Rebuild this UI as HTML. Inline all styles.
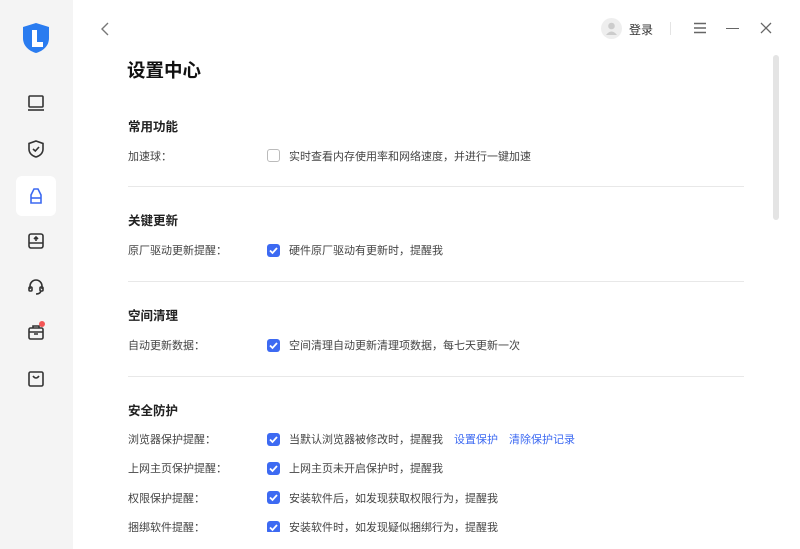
<!DOCTYPE html>
<html><head><meta charset="utf-8"><style>
*{margin:0;padding:0;box-sizing:border-box}
body{width:800px;height:549px;overflow:hidden;background:#fff;font-family:"Liberation Sans","Noto Sans CJK SC",sans-serif;color:#333;position:relative}
.side{position:absolute;left:0;top:0;width:73px;height:549px;background:#f4f4f4}
.ic{position:absolute;left:26px;width:20px;height:20px}
.a{position:absolute;white-space:nowrap}
.h{font-size:12.5px;font-weight:bold;color:#222;left:128px}
.l{font-size:11px;color:#444;left:128px}
.t{font-size:11px;color:#444;left:289px}
.cb{position:absolute;left:267px;width:13px;height:13px;border-radius:3px;background:#3d6af2}
.cb svg{position:absolute;left:1px;top:1px}
.cbo{background:#fff;border:1px solid #bbb}
.hr{position:absolute;left:128px;width:616px;height:1px;background:#e8e8e8}
.lk{color:#3d6af2;margin-left:11px}
</style></head><body>
<div class="side">
<svg style="position:absolute;left:21px;top:22px" width="30" height="32" viewBox="0 0 30 32"><path d="M15 1 L28 5 V16 C28 24 22 29 15 31 C8 29 2 24 2 16 V5 Z" fill="#2a7cf0"/><path d="M11 8 H16 V20 H22 V25 H11 Z" fill="#fff"/></svg>
<svg class="ic" style="top:93px" viewBox="0 0 20 20" fill="none" stroke="#333" stroke-width="1.6"><rect x="3" y="3" width="14" height="11" rx="1"/><path d="M2 17H18"/></svg>
<svg class="ic" style="top:139px" viewBox="0 0 20 20" fill="none" stroke="#333" stroke-width="1.6"><path d="M10 2 L17 4.5 V10 C17 14 14 17 10 18 C6 17 3 14 3 10 V4.5 Z"/><path d="M7 10 L9.3 12 L13 8"/></svg>
<div style="position:absolute;left:16px;top:176px;width:40px;height:40px;background:#fff;border-radius:6px"></div>
<svg class="ic" style="top:186px" viewBox="0 0 20 20" fill="none" stroke="#3d6af2" stroke-width="1.6"><path d="M8 3H12 L15 9 V17 H5 V9 Z"/><path d="M5 12H15"/></svg>
<svg class="ic" style="top:231px" viewBox="0 0 20 20" fill="none" stroke="#333" stroke-width="1.6"><rect x="3" y="3" width="14" height="14" rx="2"/><path d="M3 12H17M10 10V6M8 8L10 6L12 8"/></svg>
<svg class="ic" style="top:277px" viewBox="0 0 20 20" fill="none" stroke="#333" stroke-width="1.6"><path d="M4 12V9a6 6 0 0 1 12 0v3"/><rect x="3" y="10" width="3" height="4" rx="1"/><rect x="14" y="10" width="3" height="4" rx="1"/><path d="M15 14 Q14 17 10 17"/></svg>
<svg class="ic" style="top:322px" viewBox="0 0 20 20" fill="none" stroke="#333" stroke-width="1.6"><rect x="3" y="6" width="14" height="11" rx="1.5"/><path d="M7 6V4H13V6M3 10H17M8 12H12"/></svg>
<div style="position:absolute;left:39px;top:321px;width:6px;height:6px;border-radius:3px;background:#f25555"></div>
<svg class="ic" style="top:369px" viewBox="0 0 20 20" fill="none" stroke="#333" stroke-width="1.6"><rect x="3" y="3" width="14" height="14" rx="1.5"/><path d="M7 7 Q10 11 13 7"/></svg>
</div>
<svg style="position:absolute;left:100px;top:21px" width="10" height="16" viewBox="0 0 10 16" fill="none" stroke="#777" stroke-width="1.4"><path d="M8 2L2 8L8 14"/></svg>
<div style="position:absolute;left:601px;top:18px;width:21px;height:21px;border-radius:50%;background:#eee"></div>
<svg style="position:absolute;left:605px;top:21px" width="13" height="15" viewBox="0 0 13 15" fill="#ccc"><circle cx="6.5" cy="5" r="3.3"/><path d="M1 14 Q6.5 7 12 14Z"/></svg>
<div class="a" style="left:629px;top:21px;font-size:12px;color:#333">登录</div>
<div style="position:absolute;left:670px;top:22px;width:1px;height:13px;background:#e4e4e4"></div>
<svg style="position:absolute;left:693px;top:22px" width="14" height="12" viewBox="0 0 14 12" stroke="#666" stroke-width="1.4"><path d="M1 1.5H13M1 6H13M1 10.5H13"/></svg>
<div style="position:absolute;left:726px;top:28px;width:13px;height:1.4px;background:#666"></div>
<svg style="position:absolute;left:760px;top:22px" width="12" height="12" viewBox="0 0 12 12" stroke="#666" stroke-width="1.3"><path d="M1 1L11 11M11 1L1 11"/></svg>
<div style="position:absolute;left:773px;top:55px;width:6px;height:165px;border-radius:3px;background:#e4e4e4"></div>
<div class="a" style="left:127px;top:57px;font-size:18.5px;font-weight:bold;color:#111">设置中心</div>

<div class="a h" style="top:116px">常用功能</div>
<div class="a l" style="top:148px">加速球：</div>
<div class="cb cbo" style="top:149px"></div>
<div class="a t" style="top:148px">实时查看内存使用率和网络速度，并进行一键加速</div>
<div class="hr" style="top:186px"></div>

<div class="a h" style="top:210px">关键更新</div>
<div class="a l" style="top:242px">原厂驱动更新提醒：</div>
<div class="cb" style="top:244px"><svg width="11" height="11" viewBox="0 0 11 11" fill="none" stroke="#fff" stroke-width="1.8"><path d="M2 5.5L4.5 8L9 3"/></svg></div>
<div class="a t" style="top:242px">硬件原厂驱动有更新时，提醒我</div>
<div class="hr" style="top:281px"></div>

<div class="a h" style="top:305px">空间清理</div>
<div class="a l" style="top:337px">自动更新数据：</div>
<div class="cb" style="top:339px"><svg width="11" height="11" viewBox="0 0 11 11" fill="none" stroke="#fff" stroke-width="1.8"><path d="M2 5.5L4.5 8L9 3"/></svg></div>
<div class="a t" style="top:337px">空间清理自动更新清理项数据，每七天更新一次</div>
<div class="hr" style="top:376px"></div>

<div class="a h" style="top:400px">安全防护</div>
<div class="a l" style="top:431px">浏览器保护提醒：</div>
<div class="cb" style="top:433px"><svg width="11" height="11" viewBox="0 0 11 11" fill="none" stroke="#fff" stroke-width="1.8"><path d="M2 5.5L4.5 8L9 3"/></svg></div>
<div class="a t" style="top:431px">当默认浏览器被修改时，提醒我<span class="lk">设置保护</span><span class="lk">清除保护记录</span></div>
<div class="a l" style="top:460px">上网主页保护提醒：</div>
<div class="cb" style="top:462px"><svg width="11" height="11" viewBox="0 0 11 11" fill="none" stroke="#fff" stroke-width="1.8"><path d="M2 5.5L4.5 8L9 3"/></svg></div>
<div class="a t" style="top:460px">上网主页未开启保护时，提醒我</div>
<div class="a l" style="top:490px">权限保护提醒：</div>
<div class="cb" style="top:491px"><svg width="11" height="11" viewBox="0 0 11 11" fill="none" stroke="#fff" stroke-width="1.8"><path d="M2 5.5L4.5 8L9 3"/></svg></div>
<div class="a t" style="top:490px">安装软件后，如发现获取权限行为，提醒我</div>
<div class="a l" style="top:519px">捆绑软件提醒：</div>
<div class="cb" style="top:521px"><svg width="11" height="11" viewBox="0 0 11 11" fill="none" stroke="#fff" stroke-width="1.8"><path d="M2 5.5L4.5 8L9 3"/></svg></div>
<div class="a t" style="top:519px">安装软件时，如发现疑似捆绑行为，提醒我</div>
<div style="position:absolute;left:73px;top:532px;width:700px;height:17px;background:#fff"></div>
</body></html>
